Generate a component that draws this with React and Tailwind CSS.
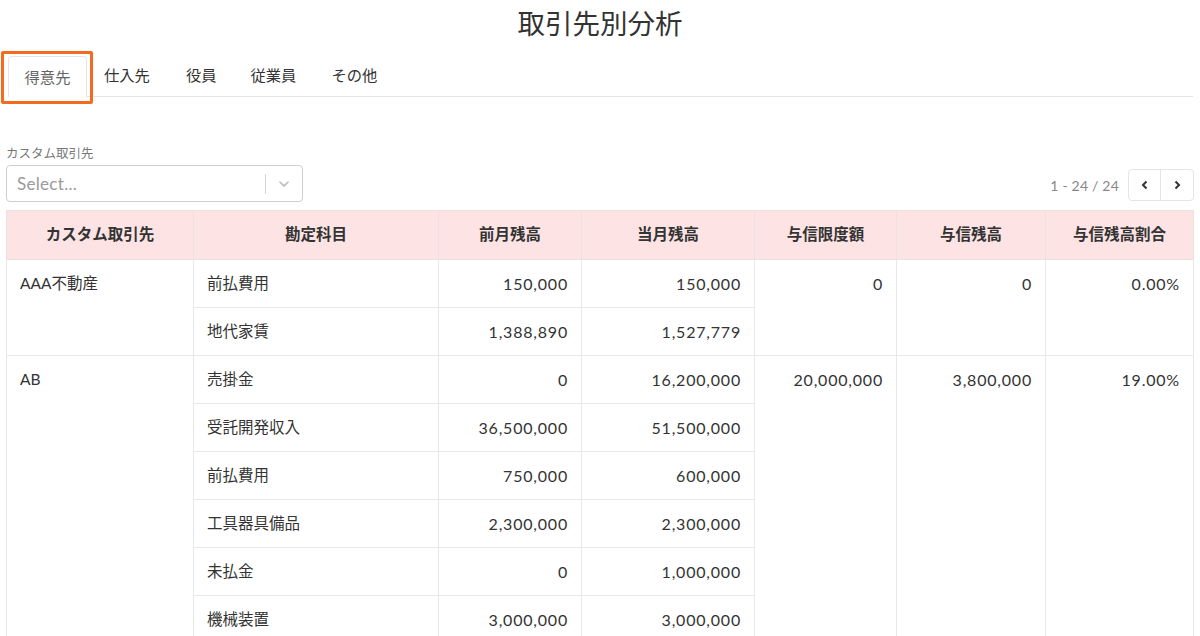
import React from "react";

const font = { fontFamily: '"Lato", "Noto Sans CJK JP", sans-serif' };

const groups = [
  {
    name: "AAA不動産",
    limit: "0",
    balance: "0",
    ratio: "0.00%",
    rows: [
      ["前払費用", "150,000", "150,000"],
      ["地代家賃", "1,388,890", "1,527,779"],
    ],
  },
  {
    name: "AB",
    limit: "20,000,000",
    balance: "3,800,000",
    ratio: "19.00%",
    rows: [
      ["売掛金", "0", "16,200,000"],
      ["受託開発収入", "36,500,000", "51,500,000"],
      ["前払費用", "750,000", "600,000"],
      ["工具器具備品", "2,300,000", "2,300,000"],
      ["未払金", "0", "1,000,000"],
      ["機械装置", "3,000,000", "3,000,000"],
    ],
  },
];

const headers = ["カスタム取引先", "勘定科目", "前月残高", "当月残高", "与信限度額", "与信残高", "与信残高割合"];
const widths = ["w-[187px]", "w-[245px]", "w-[143px]", "w-[173px]", "w-[142px]", "w-[149px]", "w-[148px]"];

const td = "border border-[#e6e8eb] h-[48px] px-[13px] pt-[12px] align-top text-[15.5px] text-[#333]";
const num = `${td} text-right text-[16px] tracking-[0.8px]`;

export default function App() {
  return (
    <div style={font} className="w-[1200px] h-[636px] overflow-hidden bg-white text-[#333]">
      <h1 className="h-[50px] pt-[5px] text-center text-[27.5px] leading-[38px] text-[#333]">取引先別分析</h1>

      <div className="relative ml-[8px] mr-[7px] flex h-[47px] items-end border-b border-[#e3e5e8]">
        <div className="relative -mb-px flex h-[41px] w-[79px] items-center justify-center rounded-t-[4px] border border-b-0 border-[#e3e5e8] bg-white text-[15.3px] text-[#666]">
          得意先
        </div>
        <div className="flex h-[41px] items-center pl-[17px] text-[15.3px] text-[#333]">
          <span className="mr-[36px]">仕入先</span>
          <span className="mr-[34px]">役員</span>
          <span className="mr-[35px]">従業員</span>
          <span>その他</span>
        </div>
        <div className="pointer-events-none absolute left-[-7px] top-[1px] h-[53px] w-[92px] rounded-[2px] border-[3px] border-[#f26b1f]" />
      </div>

      <div className="mx-[6px] mt-[50px] flex items-end justify-between">
        <div>
          <div className="text-[12.5px] leading-[14px] text-[#777]">カスタム取引先</div>
          <div className="mt-[4px] flex h-[37px] w-[297px] items-center rounded-[4px] border border-[#cfcfcf] pl-[10px]">
            <span className="flex-1 text-[17px] tracking-[0.3px] text-[#9a9a9a]">Select...</span>
            <span className="h-[20px] w-px bg-[#d6d6d6]" />
            <span className="flex w-[36px] items-center justify-center">
              <svg width="14" height="14" viewBox="0 0 14 14">
                <path d="M3 5.2 7 9l4-3.8" fill="none" stroke="#c4c4c4" strokeWidth="1.8" strokeLinecap="round" strokeLinejoin="round" />
              </svg>
            </span>
          </div>
        </div>
        <div className="mb-[1px] flex items-center">
          <span className="mr-[9px] text-[14px] tracking-[0.2px] text-[#888]">1 - 24 / 24</span>
          <div className="flex h-[32px] rounded-[4px] border border-[#e3e5e8]">
            <button className="flex w-[32px] items-center justify-center border-r border-[#e3e5e8]">
              <svg width="10" height="10" viewBox="0 0 10 10"><path d="M6.5 1.5 3 5l3.5 3.5" fill="none" stroke="#333" strokeWidth="2" /></svg>
            </button>
            <button className="flex w-[32px] items-center justify-center">
              <svg width="10" height="10" viewBox="0 0 10 10"><path d="M3.5 1.5 7 5 3.5 8.5" fill="none" stroke="#333" strokeWidth="2" /></svg>
            </button>
          </div>
        </div>
      </div>

      <table className="mx-[6px] mt-[8px] w-[1187px] table-fixed border-collapse">
        <thead>
          <tr className="bg-[#fde3e3]">
            {headers.map((h, i) => (
              <th key={h} className={`${widths[i]} h-[49px] border border-[#efe0e0] text-center text-[15.5px] font-semibold text-[#333]`}>
                {h}
              </th>
            ))}
          </tr>
        </thead>
        <tbody>
          {groups.map((g) =>
            g.rows.map((r, i) => (
              <tr key={g.name + i}>
                {i === 0 && (
                  <td rowSpan={g.rows.length} className={td}>
                    {g.name}
                  </td>
                )}
                <td className={td}>{r[0]}</td>
                <td className={num}>{r[1]}</td>
                <td className={num}>{r[2]}</td>
                {i === 0 && (
                  <>
                    <td rowSpan={g.rows.length} className={num}>{g.limit}</td>
                    <td rowSpan={g.rows.length} className={num}>{g.balance}</td>
                    <td rowSpan={g.rows.length} className={num}>{g.ratio}</td>
                  </>
                )}
              </tr>
            ))
          )}
        </tbody>
      </table>
    </div>
  );
}
